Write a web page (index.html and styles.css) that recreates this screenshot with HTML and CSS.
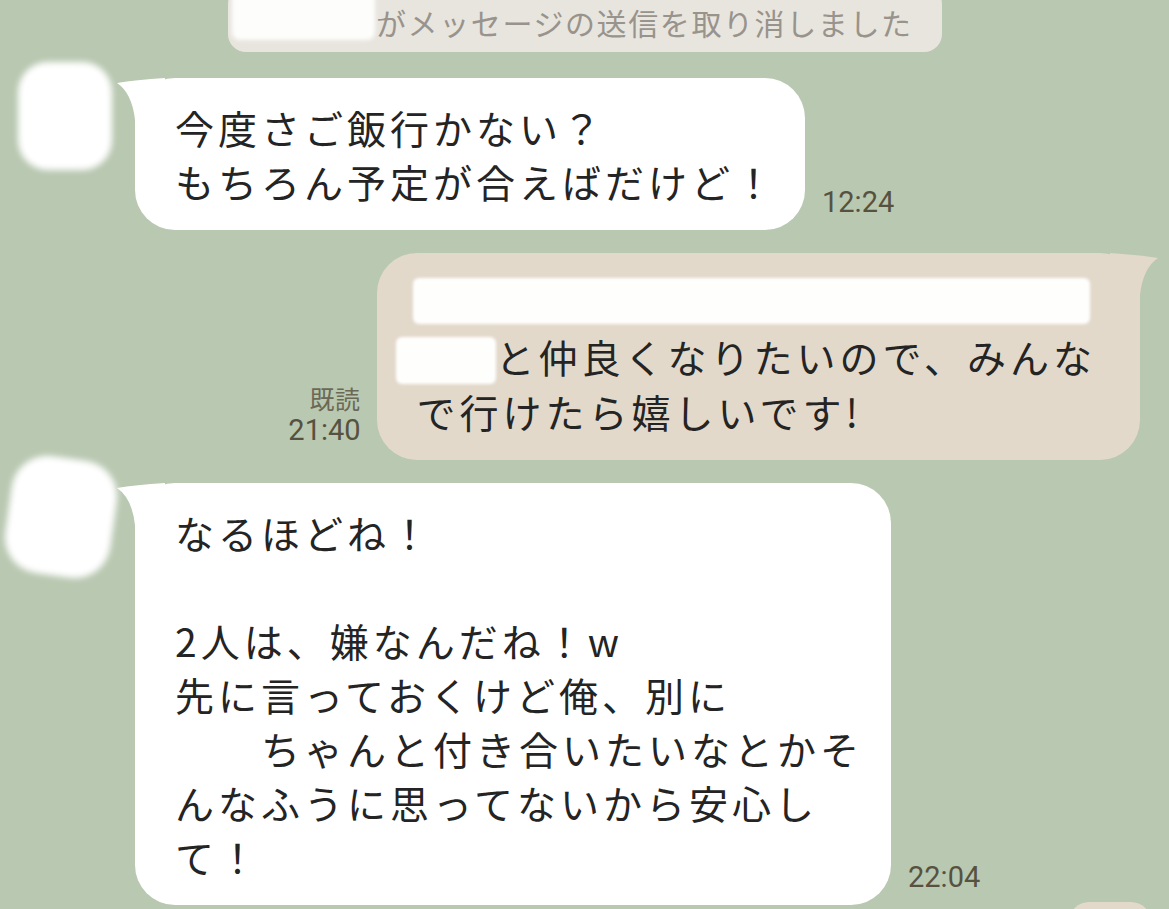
FILE: index.html
```html
<!DOCTYPE html>
<html lang="ja">
<head>
<meta charset="utf-8">
<title>LINE</title>
<link rel="stylesheet" href="styles.css">
</head>
<body>
<div class="chat">
  <div class="system">
    <span class="sys-redact"></span>
    <span class="sys-text">がメッセージの送信を取り消しました</span>
  </div>

  <div class="row recv row-1">
    <div class="avatar-col"><div class="avatar avatar-1"></div></div>
    <div class="bubble bubble-recv b1">
      <svg class="tail tail-left" viewBox="0 0 50 45" width="50" height="45"><path d="M2 5 Q 20 2 50 0 L 50 30 L 20 42 Q 17 15 2 5 Z"/></svg>
      <p class="msg">今度さご飯行かない？<br>もちろん予定が合えばだけど！</p>
    </div>
    <div class="meta"><span class="time">12:24</span></div>
  </div>

  <div class="row sent row-2">
    <div class="meta meta-sent"><span class="read">既読</span><span class="time">21:40</span></div>
    <div class="bubble bubble-sent b2">
      <svg class="tail tail-right" viewBox="0 0 50 45" width="50" height="45"><path d="M48 5 Q 30 2 0 0 L 0 30 L 30 42 Q 33 15 48 5 Z"/></svg>
      <p class="msg"><span class="redact redact-long"></span><br><span class="redact redact-short"></span>と仲良くなりたいので、みんな<br>で行けたら嬉しいです!</p>
    </div>
  </div>

  <div class="row recv row-3">
    <div class="avatar-col"><div class="avatar avatar-2"></div></div>
    <div class="bubble bubble-recv b3">
      <svg class="tail tail-left" viewBox="0 0 50 45" width="50" height="45"><path d="M2 5 Q 20 2 50 0 L 50 30 L 20 42 Q 17 15 2 5 Z"/></svg>
      <p class="msg">なるほどね！<br><br>2人は、嫌なんだね！w<br>先に言っておくけど俺、別に<br><span class="gap"></span>ちゃんと付き合いたいなとかそ<br>んなふうに思ってないから安心し<br>て！</p>
    </div>
    <div class="meta"><span class="time">22:04</span></div>
  </div>

  <div class="row sent row-4">
    <div class="bubble-peek"></div>
  </div>
</div>
</body>
</html>
```

FILE: styles.css
```css
html, body {
  margin: 0;
  padding: 0;
}
body {
  width: 1169px;
  height: 909px;
  overflow: hidden;
  background: #b9c8b1;
  font-family: "Noto Sans CJK JP", "Noto Sans", sans-serif;
  color: #242424;
}
.chat {
  display: flex;
  flex-direction: column;
}

/* system notice */
.system {
  align-self: flex-start;
  margin-left: 228px;
  margin-top: -14px;
  width: 714px;
  height: 66px;
  box-sizing: border-box;
  background: #e8e5de;
  border-radius: 18px;
  display: flex;
  align-items: center;
}
.sys-redact {
  width: 143px;
  height: 50px;
  margin-left: 4px;
  margin-top: -8px;
  background: #fdfdfc;
  border-radius: 8px;
  filter: blur(2px);
  flex-shrink: 0;
}
.sys-text {
  margin-left: 1px;
  font-size: 30px;
  line-height: 32px;
  margin-top: 6px;
  letter-spacing: 1.6px;
  color: #98938c;
  white-space: nowrap;
}

/* rows */
.row {
  display: flex;
  align-items: flex-start;
}
.row-1 { margin-top: 10px; }
.row-2 { margin-top: 23px; justify-content: flex-end; padding-right: 29px; align-items: stretch; }
.row-3 { margin-top: -5px; }
.row-4 { margin-top: -3px; justify-content: flex-end; padding-right: 18px; }

.avatar-col {
  width: 135px;
  flex-shrink: 0;
}
.avatar {
  background: #ffffff;
  filter: blur(3px);
}
.avatar-1 {
  margin-left: 18px;
  width: 94px;
  height: 108px;
  border-radius: 30px;
}
.avatar-2 {
  margin-left: 8px;
  margin-top: 3px;
  width: 106px;
  height: 118px;
  border-radius: 36px;
  transform: rotate(8deg);
}

/* bubbles */
.bubble {
  position: relative;
  border-radius: 40px;
  padding: 22px 28px 22px 40px;
  flex-shrink: 0;
}
.bubble-recv {
  background: #ffffff;
}
.bubble-sent {
  background: #e2d9cb;
}
.b1 { margin-top: 16px; }
.b2 { padding-right: 44px; }
.b3 { margin-top: 28px; }

.tail {
  position: absolute;
  top: 0;
}
.tail-left {
  left: -20px;
  fill: #ffffff;
}
.tail-right {
  right: -20px;
  fill: #e2d9cb;
}

.msg {
  position: relative;
  margin: 0;
  font-size: 39px;
  line-height: 54px;
  letter-spacing: 4px;
  white-space: nowrap;
}

.redact {
  display: inline-block;
  vertical-align: middle;
  background: #fefefd;
  filter: blur(1.5px);
  border-radius: 6px;
}
.redact-long {
  width: 677px;
  height: 46px;
  margin-left: -4px;
  margin-top: -14px;
}
.redact-short {
  width: 100px;
  height: 47px;
  margin-left: -21px;
  margin-top: -4px;
}
.gap {
  display: inline-block;
  width: 86px;
}

/* meta */
.meta {
  align-self: flex-end;
  margin-left: 17px;
  margin-bottom: 12px;
  display: flex;
  flex-direction: column;
  align-items: flex-end;
}
.meta-sent {
  margin-left: 0;
  margin-right: 16px;
  margin-bottom: 14px;
  justify-content: flex-end;
}
.time {
  font-family: Roboto, "Liberation Sans", sans-serif;
  font-size: 29px;
  line-height: 32px;
  color: #575240;
}
.read {
  font-size: 25px;
  line-height: 32px;
  color: #6c6856;
  letter-spacing: 0.5px;
}

.bubble-peek {
  width: 82px;
  height: 40px;
  border-radius: 22px;
  background: #e2d9cb;
}
```
